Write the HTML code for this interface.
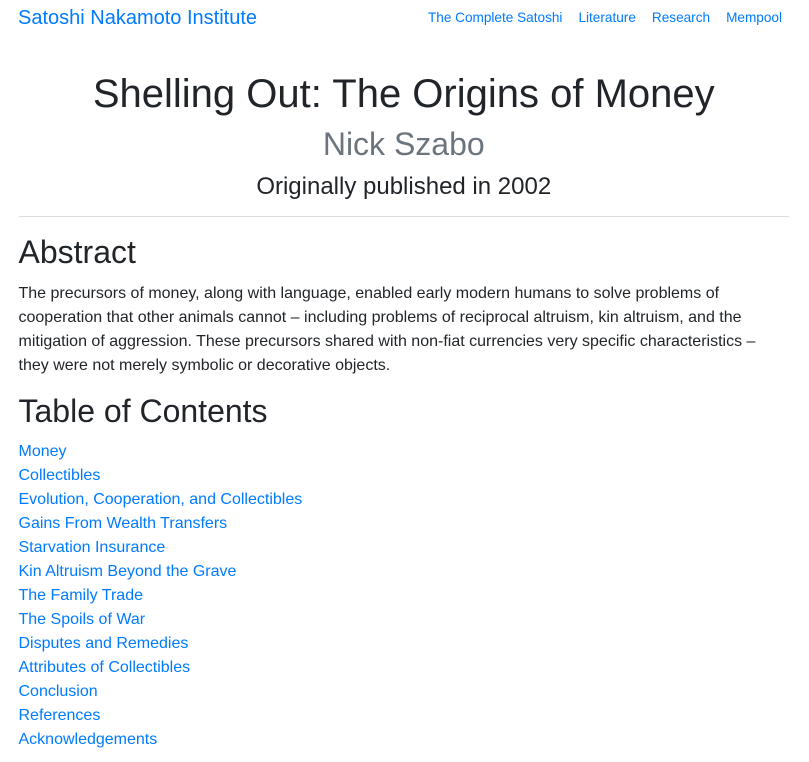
<!DOCTYPE html>
<html><head><meta charset="utf-8"><style>
*{box-sizing:border-box}
body{margin:0;font-family:"Liberation Sans",Arial,sans-serif;color:#212529;font-size:16px;line-height:24px;background:#fff}
a{color:#007bff;text-decoration:none}
.nav{position:relative;height:35px}
.brand{position:absolute;left:18px;top:5px;font-size:20px;line-height:26px}
.links{position:absolute;right:27px;top:9px;font-size:13.6px;line-height:18px}
.links a{margin-left:16px}
.wrap{margin:0 20px 0 18.5px}
h1{font-weight:400;text-align:center;font-size:40px;line-height:50px;margin:34px 0 0}
.author{text-align:center;color:#6c757d;font-size:32px;line-height:40px;margin-top:5px}
.pub{text-align:center;font-size:24px;line-height:30px;margin-top:8px}
hr{border:0;border-top:1px solid #ddd;margin:14px 0 0}
h2{font-weight:400;font-size:32px;line-height:38px;margin:16px 0 11px}
p{margin:0}
ul{list-style:none;margin:0;padding:0}
</style></head><body>
<div class="nav"><a class="brand">Satoshi Nakamoto Institute</a>
<div class="links"><a>The Complete Satoshi</a><a>Literature</a><a>Research</a><a>Mempool</a></div></div>
<div class="wrap">
<h1>Shelling Out: The Origins of Money</h1>
<div class="author">Nick Szabo</div>
<div class="pub">Originally published in 2002</div>
<hr>
<h2>Abstract</h2>
<p>The precursors of money, along with language, enabled early modern humans to solve problems of cooperation that other animals cannot – including problems of reciprocal altruism, kin altruism, and the mitigation of aggression. These precursors shared with non-fiat currencies very specific characteristics – they were not merely symbolic or decorative objects.</p>
<h2 style="margin-top:14px;margin-bottom:10px">Table of Contents</h2>
<ul>
<li><a>Money</a></li><li><a>Collectibles</a></li><li><a>Evolution, Cooperation, and Collectibles</a></li><li><a>Gains From Wealth Transfers</a></li><li><a>Starvation Insurance</a></li><li><a>Kin Altruism Beyond the Grave</a></li><li><a>The Family Trade</a></li><li><a>The Spoils of War</a></li><li><a>Disputes and Remedies</a></li><li><a>Attributes of Collectibles</a></li><li><a>Conclusion</a></li><li><a>References</a></li><li><a>Acknowledgements</a></li>
</ul>
</div>
</body></html>
